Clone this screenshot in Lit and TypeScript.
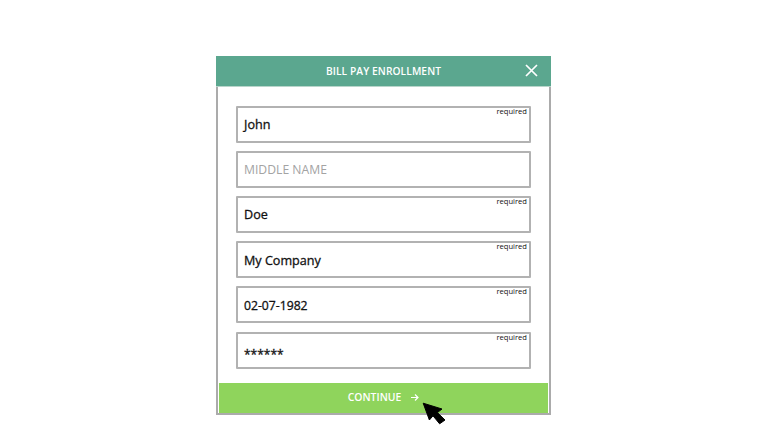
import { LitElement, html, css } from "lit";
import { customElement } from "lit/decorators.js";

const FIELDS = [
  { value: "John", required: true },
  { value: "MIDDLE NAME", required: false, placeholder: true },
  { value: "Doe", required: true },
  { value: "My Company", required: true },
  { value: "02-07-1982", required: true, narrow: true },
  { value: "******", required: true, stars: true },
];

@customElement("app-root")
export class AppRoot extends LitElement {
  static styles = css`
    :host {
      display: block;
      position: relative;
      width: 768px;
      height: 432px;
      background: #fff;
      overflow: hidden;
      font-family: "Open Sans", sans-serif;
    }
    .page {
      display: flex;
      justify-content: center;
      padding: 56px 0 0 0;
      box-sizing: border-box;
      height: 100%;
    }
    .card {
      width: 335px;
      height: 359px;
      margin-left: -1px;
      box-sizing: border-box;
      border: 2px solid #ababab;
      border-top: none;
      display: flex;
      flex-direction: column;
      background: #fff;
    }
    .head {
      margin: 0 -2px;
      height: 30px;
      flex: none;
      background: #5ba78f;
      border-bottom: 1px solid #b9d5cb;
      box-sizing: content-box;
      color: #fff;
      display: flex;
      align-items: center;
      justify-content: center;
      position: relative;
      font-size: 10.2px;
      font-weight: 600;
      letter-spacing: 0.1px;
    }
    .title {
      transform: translateY(-0.5px);
    }
    .close {
      position: absolute;
      left: 308.5px;
      top: 7.5px;
      width: 13px;
      height: 13px;
    }
    .fields {
      flex: 1;
      display: flex;
      flex-direction: column;
      gap: 8.2px;
      padding: 18.6px 18px 0 18px;
    }
    .field {
      height: 37px;
      flex: none;
      box-sizing: border-box;
      border: 2px solid #b2b2b2;
      border-radius: 1px;
      position: relative;
      display: flex;
      align-items: center;
      padding: 0 0 0 6px;
      font-size: 12.6px;
      font-weight: 400;
      color: #111;
      -webkit-text-stroke: 0.3px #111;
    }
    .field.req .val {
      padding-top: 1px;
    }
    .field.narrow {
      font-size: 12.2px;
    }
    .field.stars .val {
      padding-top: 9px;
      font-size: 12px;
    }
    .field.ph {
      color: #a3a3a3;
      font-size: 12.2px;
      -webkit-text-stroke: 0;
    }
    .req-tag {
      position: absolute;
      right: 2px;
      top: -3px;
      font-size: 7.6px;
      line-height: 12px;
      font-weight: 400;
      color: #111;
      -webkit-text-stroke: 0;
    }
    .btn {
      height: 30px;
      margin: 0 1px 0 1px;
      flex: none;
      background: #8fd45c;
      color: #fff;
      display: flex;
      align-items: center;
      justify-content: center;
      gap: 9px;
      font-size: 10.4px;
      font-weight: 600;
      padding-bottom: 2px;
      box-sizing: border-box;
    }
    .btn svg {
      width: 9px;
      height: 9px;
    }
    .cursor {
      position: absolute;
      left: 422px;
      top: 402px;
      width: 24px;
      height: 23px;
    }
  `;

  render() {
    return html`
      <div class="page">
        <div class="card">
          <div class="head">
            <span class="title">BILL PAY ENROLLMENT</span>
            <svg class="close" viewBox="0 0 13 13" fill="none" stroke="#fff" stroke-width="1.7">
              <path d="M1 1 L12 12 M12 1 L1 12" />
            </svg>
          </div>
          <div class="fields">
            ${FIELDS.map(
              (f) => html`
                <div class="field ${f.required ? "req" : ""} ${f.placeholder ? "ph" : ""} ${f.stars ? "stars" : ""} ${f.narrow ? "narrow" : ""}">
                  <span class="val">${f.value}</span>
                  ${f.required ? html`<span class="req-tag">required</span>` : ""}
                </div>
              `
            )}
          </div>
          <div class="btn">
            CONTINUE
            <svg viewBox="0 0 9 9" fill="none" stroke="#fff" stroke-width="1.2">
              <path d="M1 4.5 H8 M5 1.5 L8 4.5 L5 7.5" />
            </svg>
          </div>
        </div>
      </div>
      <svg class="cursor" viewBox="0 0 24 23">
        <path d="M1.2 1.2 L20 7 L15.4 10.6 L23 18 L17.6 21.8 L11 13.8 L7.4 18 Z" fill="#000" stroke="#000" stroke-width="1" stroke-linejoin="round" />
      </svg>
    `;
  }
}
